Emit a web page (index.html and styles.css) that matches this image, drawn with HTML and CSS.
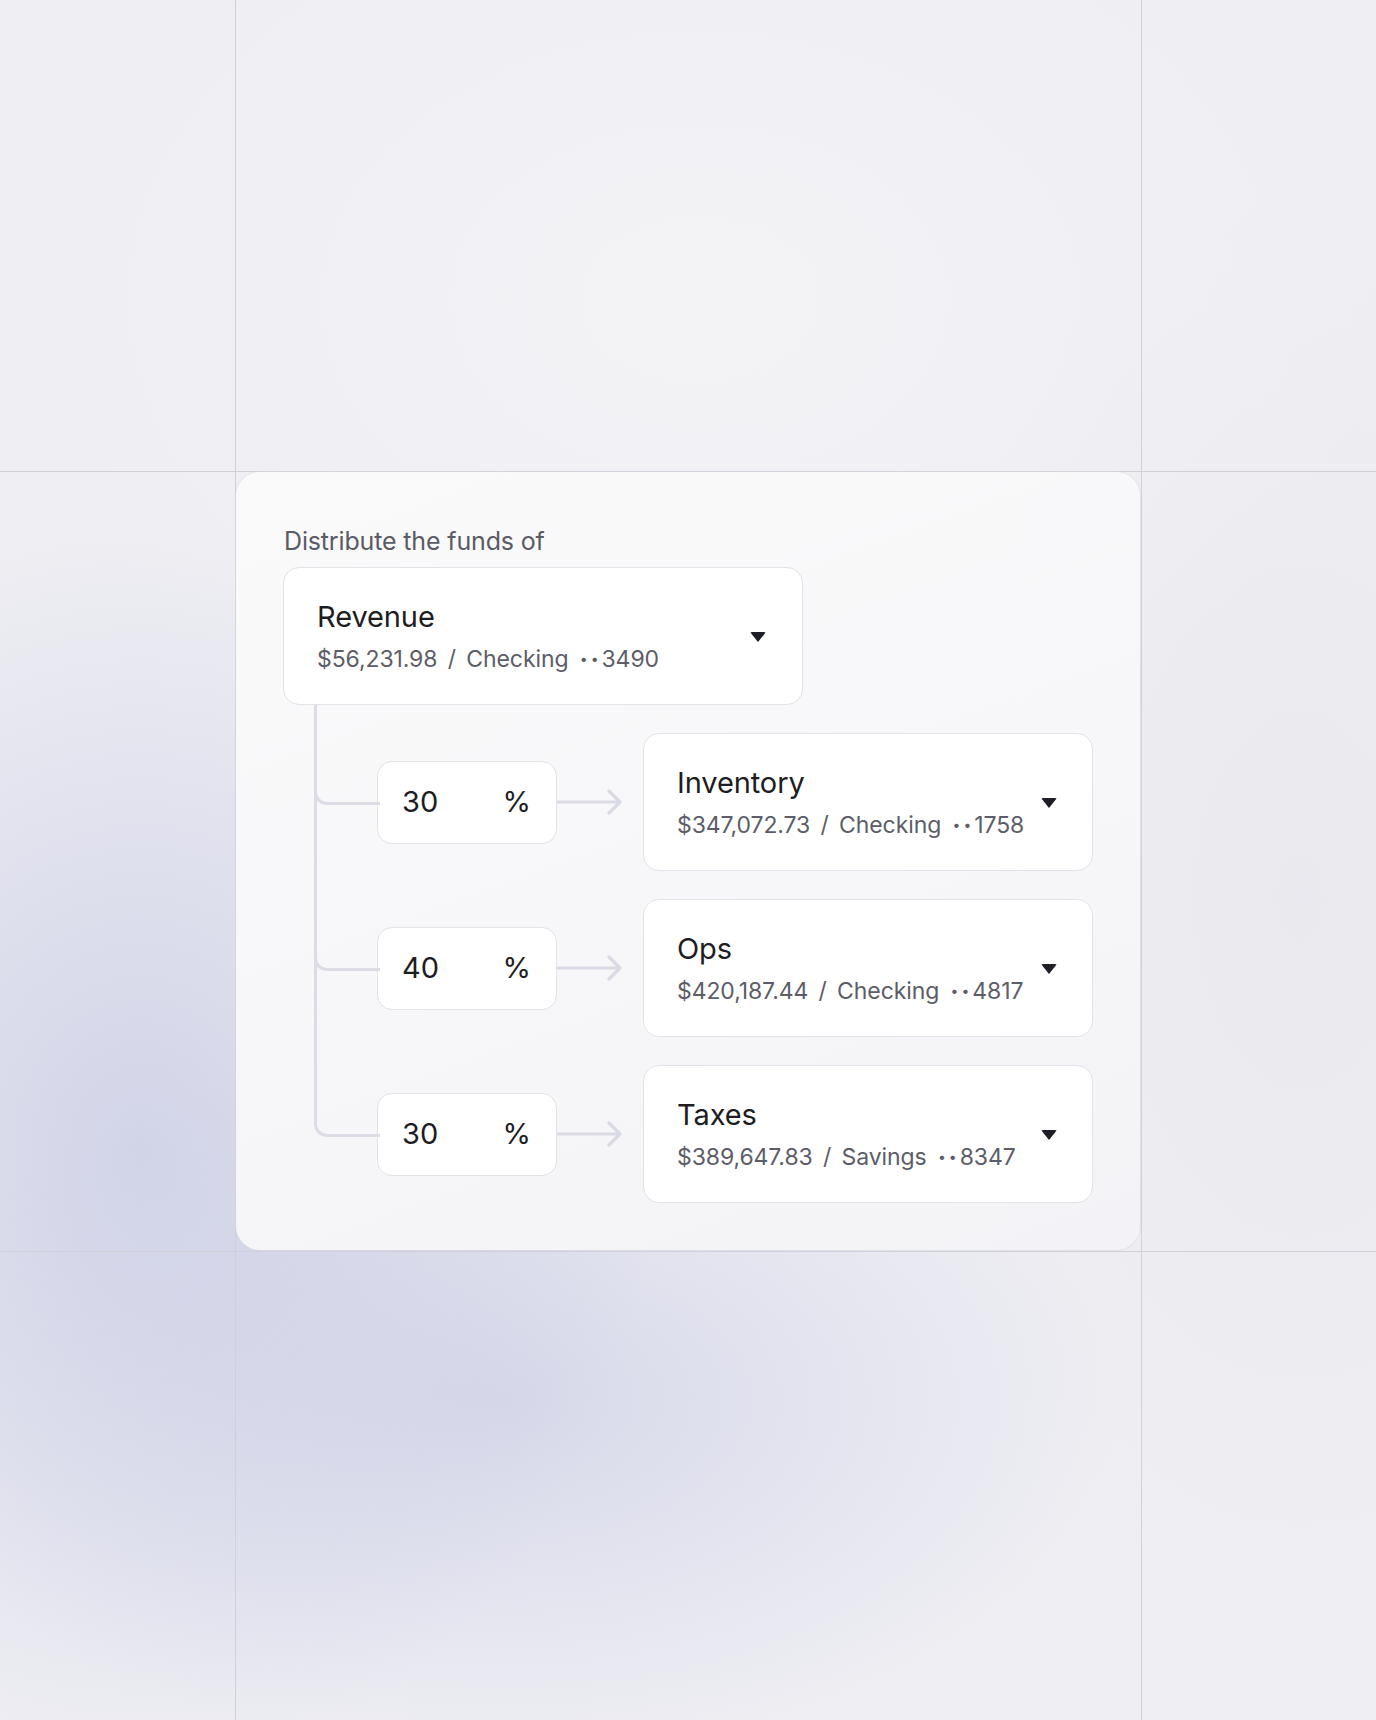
FILE: index.html
```html
<!DOCTYPE html>
<html lang="en">
<head>
<meta charset="utf-8">
<title>Distribute funds</title>
<link rel="stylesheet" href="styles.css">
</head>
<body>
<div class="page">
  <section class="card">
    <p class="label">Distribute the funds of</p>
    <div class="select source">
      <div class="select-text">
        <div class="title">Revenue</div>
        <div class="sub">$56,231.98 <span class="sep">/</span> Checking <span class="dots">••</span>3490</div>
      </div>
      <span class="caret"></span>
    </div>
    <div class="tree">
      <div class="row">
        <div class="branch"></div>
        <div class="pct"><span>30</span><span>%</span></div>
        <svg class="arrow" width="65" height="28" viewBox="0 0 65 28"><path d="M1.5 14H63M52 3L63 14L52 25" fill="none" stroke="#dadae5" stroke-width="3.2" stroke-linecap="round" stroke-linejoin="round"/></svg>
        <div class="select target">
          <div class="select-text">
            <div class="title">Inventory</div>
            <div class="sub">$347,072.73 <span class="sep">/</span> Checking <span class="dots">••</span>1758</div>
          </div>
          <span class="caret"></span>
        </div>
      </div>
      <div class="row">
        <div class="branch"></div>
        <div class="pct"><span>40</span><span>%</span></div>
        <svg class="arrow" width="65" height="28" viewBox="0 0 65 28"><path d="M1.5 14H63M52 3L63 14L52 25" fill="none" stroke="#dadae5" stroke-width="3.2" stroke-linecap="round" stroke-linejoin="round"/></svg>
        <div class="select target">
          <div class="select-text">
            <div class="title">Ops</div>
            <div class="sub">$420,187.44 <span class="sep">/</span> Checking <span class="dots">••</span>4817</div>
          </div>
          <span class="caret"></span>
        </div>
      </div>
      <div class="row">
        <div class="branch"></div>
        <div class="pct"><span>30</span><span>%</span></div>
        <svg class="arrow" width="65" height="28" viewBox="0 0 65 28"><path d="M1.5 14H63M52 3L63 14L52 25" fill="none" stroke="#dadae5" stroke-width="3.2" stroke-linecap="round" stroke-linejoin="round"/></svg>
        <div class="select target">
          <div class="select-text">
            <div class="title">Taxes</div>
            <div class="sub">$389,647.83 <span class="sep">/</span> Savings <span class="dots">••</span>8347</div>
          </div>
          <span class="caret"></span>
        </div>
      </div>
    </div>
  </section>
</div>
</body>
</html>
```
FILE: styles.css
```css
* { box-sizing: border-box; }
html, body { margin: 0; padding: 0; }
body {
  width: 1376px;
  min-height: 1720px;
  font-family: "Inter", "Liberation Sans", sans-serif;
  background-color: #eeeef3;
  background-image:
    linear-gradient(#cfd0da, #cfd0da),
    linear-gradient(#cfd0da, #cfd0da),
    linear-gradient(#cfd0da, #cfd0da),
    linear-gradient(#cfd0da, #cfd0da),
    radial-gradient(ellipse 520px 620px at 140px 1150px, rgba(200, 203, 228, 0.75), rgba(200, 203, 228, 0) 100%),
    radial-gradient(ellipse 620px 360px at 500px 1400px, rgba(205, 208, 230, 0.7), rgba(205, 208, 230, 0) 100%),
    radial-gradient(ellipse 700px 500px at 700px 300px, rgba(244, 243, 246, 0.9), rgba(244, 243, 246, 0) 100%),
    radial-gradient(ellipse 400px 700px at 1300px 900px, rgba(232, 232, 238, 0.8), rgba(232, 232, 238, 0) 100%);
  background-size: 1px 100%, 1px 100%, 100% 1px, 100% 1px, 100% 100%, 100% 100%, 100% 100%, 100% 100%;
  background-position: 235px 0, 1141px 0, 0 471px, 0 1251px, 0 0, 0 0, 0 0, 0 0;
  background-repeat: no-repeat;
}
.page {
  padding: 472px 0 0 236px;
}
.card {
  width: 904px;
  height: 778px;
  border-radius: 24px;
  background: linear-gradient(160deg, #fafafb 0%, #f7f7f9 55%, #f3f3f7 100%);
  padding: 54px 47px 0 47px;
  box-shadow: 0 0 0 1px rgba(215, 215, 225, 0.5);
}
.label {
  margin: 0 0 11px 1px;
  font-size: 25px;
  line-height: 30px;
  color: #5a5b65;
  letter-spacing: -0.15px;
}
.select {
  display: flex;
  align-items: center;
  justify-content: space-between;
  background: #fff;
  border: 1.5px solid #e2e2e8;
  border-radius: 16px;
  padding: 0 36px 0 33px;
}
.source { width: 520px; height: 138px; }
.target { width: 450px; height: 138px; padding-right: 35px; }
.select-text { display: flex; flex-direction: column; padding-top: 3px; }
.title {
  font-size: 29px;
  line-height: 34px;
  color: #1d1d23;
  letter-spacing: -0.1px;
}
.sub {
  margin-top: 11px;
  font-size: 23px;
  line-height: 28px;
  color: #5c5d67;
  letter-spacing: -0.1px;
  white-space: nowrap;
}
.sep { margin: 0 4px; }
.dots {
  font-size: 14px;
  letter-spacing: 3px;
  margin-left: 5px;
  position: relative;
  top: -3px;
}
.caret {
  width: 0;
  height: 0;
  border-left: 8px solid transparent;
  border-right: 8px solid transparent;
  border-top: 10px solid #1e1e26;
  border-radius: 2px;
  margin-top: 2px;
}
.tree {
  padding-top: 14px;
}
.row {
  display: flex;
  align-items: center;
  height: 166px;
}
.branch {
  position: relative;
  width: 94px;
  align-self: stretch;
}
.branch::before {
  content: "";
  position: absolute;
  left: 31px;
  top: 0;
  bottom: 0;
  width: 3px;
  background: #dcdce6;
}
.row:first-child .branch::before { top: -14px; }
.row:last-child .branch::before { bottom: calc(50% + 8px); }
.branch::after {
  content: "";
  position: absolute;
  left: 31px;
  top: calc(50% - 18px);
  width: 63px;
  height: 18px;
  border-left: 3px solid #dcdce6;
  border-bottom: 3px solid #dcdce6;
  border-bottom-left-radius: 13px;
}
.pct {
  width: 180px;
  height: 83px;
  display: flex;
  align-items: center;
  justify-content: space-between;
  padding: 0 25px 2px 24px;
  background: #fff;
  border: 1.5px solid #e2e2e8;
  border-radius: 15px;
  font-size: 29px;
  color: #1d1d23;
}
.arrow { display: block; margin: 0 21px 0 0; }
```
